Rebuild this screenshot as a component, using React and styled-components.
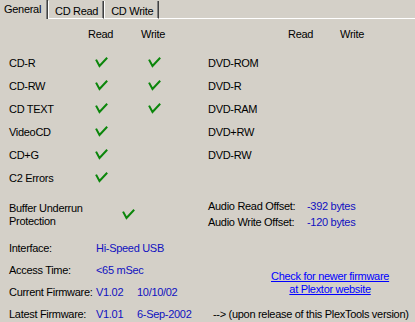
import React from "react";
import styled, { createGlobalStyle } from "styled-components";

const Global = createGlobalStyle`
  html, body { margin: 0; padding: 0; background: #d4d0c8; overflow: hidden; }
  body {
    font-family: "Liberation Sans", Arial, sans-serif;
    font-size: 11px;
    letter-spacing: -0.3px;
    color: #000;
  }
`;

const Page = styled.div`
  width: 415px;
  height: 322px;
  background: #d4d0c8;
  overflow: hidden;
`;

const TabStrip = styled.div`
  display: flex;
  align-items: flex-end;
  height: 19px;
  margin-left: -3px;
`;

const Tab = styled.div`
  box-sizing: border-box;
  height: ${(p) => (p.$active ? "19px" : "18px")};
  padding: ${(p) => (p.$active ? "3px 6px 0 6px" : "4px 5px 0 6px")};
  border-left: 1px solid #fff;
  border-right: 1px solid #404040;
  box-shadow: inset -1px 0 0 #808080;
  border-bottom: ${(p) => (p.$active ? "none" : "1px solid #fff")};
  white-space: nowrap;
  line-height: 12px;
`;

const TabFill = styled.div`
  flex: 1;
  height: 0;
  border-bottom: 1px solid #fff;
`;

const Panel = styled.div`
  padding: 4px 0 0 9px;
`;

const CapSection = styled.div`
  display: flex;
`;

const CapTable = styled.div`
  display: grid;
  grid-template-columns: ${(p) => p.$cols};
  grid-template-rows: 28px repeat(6, 23px);
  align-items: center;
`;

const Head = styled.div`
  align-self: start;
  line-height: 23px;
`;

const Label = styled.div`
  white-space: nowrap;
`;

const CheckCell = styled.div`
  display: flex;
  align-items: center;
  padding-left: ${(p) => p.$pad || 7}px;
  height: 23px;
`;

const Check = () => (
  <svg width="13" height="11" viewBox="0 0 13 11">
    <path d="M1.5 3.5 L4.5 9 L11.5 1.5" fill="none" stroke="#0b860b" strokeWidth="2" strokeLinecap="square" />
  </svg>
);

const MidSection = styled.div`
  display: flex;
  margin-top: 9px;
`;

const BufferBlock = styled.div`
  width: 199px;
  display: flex;
  align-items: center;
  padding-top: 1px;
`;

const BufferLabel = styled.div`
  width: 113px;
  line-height: 13px;
`;

const Offsets = styled.div`
  display: grid;
  grid-template-columns: 99px auto;
  grid-auto-rows: 16px;
  align-items: center;
`;

const Value = styled.div`
  color: #1010c0;
  white-space: nowrap;
  grid-column: ${(p) => p.$span || "auto"};
`;

const InfoGrid = styled.div`
  display: grid;
  grid-template-columns: 87px 41px 76px 1fr;
  grid-template-rows: repeat(4, 22px);
  align-items: center;
  margin-top: 7px;
`;

const Link = styled.a`
  grid-column: 4;
  grid-row: 2 / span 2;
  justify-self: start;
  margin: 3px 0 0 58px;
  color: #0000ff;
  text-decoration: underline;
  text-align: center;
  line-height: 13px;
  cursor: pointer;
`;

const Note = styled.div`
  grid-column: 4;
  white-space: nowrap;
`;

const leftRows = [
  ["CD-R", true, true],
  ["CD-RW", true, true],
  ["CD TEXT", true, true],
  ["VideoCD", true, false],
  ["CD+G", true, false],
  ["C2 Errors", true, false],
];

const rightRows = ["DVD-ROM", "DVD-R", "DVD-RAM", "DVD+RW", "DVD-RW"];

export default function App() {
  return (
    <Page>
      <Global />
      <TabStrip>
        <Tab $active>General</Tab>
        <Tab>CD Read</Tab>
        <Tab>CD Write</Tab>
        <TabFill />
      </TabStrip>
      <Panel>
        <CapSection>
          <CapTable $cols="79px 53px 67px">
            <div />
            <Head>Read</Head>
            <Head>Write</Head>
            {leftRows.map(([name, r, w]) => (
              <React.Fragment key={name}>
                <Label>{name}</Label>
                <CheckCell>{r && <Check />}</CheckCell>
                <CheckCell>{w && <Check />}</CheckCell>
              </React.Fragment>
            ))}
          </CapTable>
          <CapTable $cols="80px 52px 52px">
            <div />
            <Head>Read</Head>
            <Head>Write</Head>
            {rightRows.map((name) => (
              <React.Fragment key={name}>
                <Label>{name}</Label>
                <CheckCell />
                <CheckCell />
              </React.Fragment>
            ))}
          </CapTable>
        </CapSection>
        <MidSection>
          <BufferBlock>
            <BufferLabel>
              Buffer Underrun
              <br />
              Protection
            </BufferLabel>
            <Check />
          </BufferBlock>
          <Offsets>
            <Label>Audio Read Offset:</Label>
            <Value>-392 bytes</Value>
            <Label>Audio Write Offset:</Label>
            <Value>-120 bytes</Value>
          </Offsets>
        </MidSection>
        <InfoGrid>
          <Label>Interface:</Label>
          <Value $span="2 / span 2">Hi-Speed USB</Value>
          <div />
          <Label>Access Time:</Label>
          <Value $span="2 / span 2">&lt;65 mSec</Value>
          <Link>
            Check for newer firmware
            <br />
            at Plextor website
          </Link>
          <Label>Current Firmware:</Label>
          <Value>V1.02</Value>
          <Value>10/10/02</Value>
          <Label>Latest Firmware:</Label>
          <Value>V1.01</Value>
          <Value>6-Sep-2002</Value>
          <Note>--&gt; (upon release of this PlexTools version)</Note>
        </InfoGrid>
      </Panel>
    </Page>
  );
}
